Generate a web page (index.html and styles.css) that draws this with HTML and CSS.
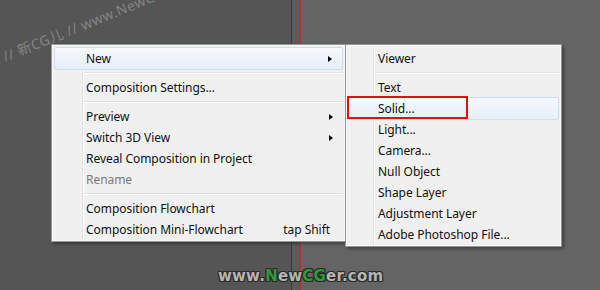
FILE: index.html
```html
<!DOCTYPE html>
<html>
<head>
<meta charset="utf-8">
<link rel="stylesheet" href="styles.css">
</head>
<body>
<div class="stage">
  <div class="col col-left"></div>
  <div class="col col-line"></div>
  <div class="col col-mid"></div>
  <div class="col col-red"></div>
  <div class="col col-right"></div>

  <div class="wm-top">儿 // 新CG儿 // www.NewCGer</div>

  <div class="menu main-menu">
    <div class="gutter"></div>
    <div class="item hl"><span class="label">New</span><span class="arrow"></span></div>
    <div class="sep"></div>
    <div class="item"><span class="label">Composition Settings...</span></div>
    <div class="sep"></div>
    <div class="item"><span class="label">Preview</span><span class="arrow"></span></div>
    <div class="item"><span class="label">Switch 3D View</span><span class="arrow"></span></div>
    <div class="item"><span class="label">Reveal Composition in Project</span></div>
    <div class="item disabled"><span class="label">Rename</span></div>
    <div class="sep"></div>
    <div class="item"><span class="label">Composition Flowchart</span></div>
    <div class="item"><span class="label">Composition Mini-Flowchart</span><span class="shortcut">tap Shift</span></div>
  </div>

  <div class="menu sub-menu">
    <div class="gutter"></div>
    <div class="item"><span class="label">Viewer</span></div>
    <div class="sep"></div>
    <div class="item"><span class="label">Text</span></div>
    <div class="item hl"><span class="label">Solid...</span><span class="redbox"></span></div>
    <div class="item"><span class="label">Light...</span></div>
    <div class="item"><span class="label">Camera...</span></div>
    <div class="item"><span class="label">Null Object</span></div>
    <div class="item"><span class="label">Shape Layer</span></div>
    <div class="item"><span class="label">Adjustment Layer</span></div>
    <div class="item"><span class="label">Adobe Photoshop File...</span></div>
  </div>

  <div class="wm-bottom">www.<span class="g">N</span>ew<span class="g">CG</span>er.com</div>
</div>
</body>
</html>
```
FILE: styles.css
```css
* { box-sizing: border-box; }
html, body { margin: 0; padding: 0; }
body { width: 600px; height: 290px; overflow: hidden; font-family: "Noto Sans", "Liberation Sans", sans-serif; }

.stage { position: relative; width: 600px; height: 290px; display: flex; overflow: hidden; }
.col { height: 100%; }
.col-left { width: 291px; background: #555555; }
.col-line { width: 1px; background: #3a3a46; }
.col-mid { width: 7px; background: #5b5b5b; }
.col-red { width: 2px; background: #a83636; }
.col-right { flex: 1; background: #646464; }

.wm-top {
  position: absolute; left: -18px; top: 54px;
  transform: rotate(-22deg); transform-origin: left top;
  font-size: 14px; color: rgba(200,200,200,0.42); white-space: nowrap;
  font-family: "Noto Sans", "Noto Sans CJK SC", sans-serif; letter-spacing: 0.5px;
}

.menu {
  position: absolute;
  background: #f0f0f0;
  border: 1px solid #979797;
  box-shadow: inset 0 0 0 1px #f8f8f8, 2px 2px 3px rgba(0,0,0,0.35);
  font-size: 12px; color: #111;
  display: flex; flex-direction: column;
}
.main-menu { left: 51px; top: 44px; width: 295px; padding: 3px 2px 1px; }
.sub-menu { left: 345px; top: 44px; width: 217px; padding: 3px 2px 1px; }

.gutter { position: absolute; top: 2px; bottom: 2px; width: 2px; border-left: 1px solid #e2e3e3; border-right: 1px solid #ffffff; }
.main-menu .gutter { left: 30px; }
.sub-menu .gutter { left: 27px; }

.item { position: relative; height: 21px; display: flex; align-items: center; padding-right: 8px; letter-spacing: -0.05px; }
.main-menu .item { padding-left: 32px; }
.sub-menu .item { padding-left: 30px; }
.label { flex: 1; white-space: nowrap; }
.item.disabled { color: #7a7a7a; }
.shortcut { margin-right: 5px; white-space: nowrap; }
.arrow { width: 0; height: 0; border-top: 3.5px solid transparent; border-bottom: 3.5px solid transparent; border-left: 4px solid #000; margin-right: 2px; }

.item.hl {
  border: 1px solid #c9dff3;
  border-radius: 2px;
  background: linear-gradient(#f6f9fd, #e6eef8);
  margin-top: -1px; margin-bottom: -1px; height: 23px;
}
.main-menu .item.hl { padding-left: 31px; }
.sub-menu .item.hl { padding-left: 29px; }

.sep { height: 8px; position: relative; margin-left: 30px; }
.sep::before { content: ""; position: absolute; left: 0; right: 0; top: 3px; height: 1px; background: #e0e0e0; }
.sep::after { content: ""; position: absolute; left: 0; right: 0; top: 4px; height: 1px; background: #ffffff; }
.sub-menu .sep { margin-left: 27px; }

.redbox { position: absolute; left: -2px; top: -2px; width: 121px; height: 23px; border: 2px solid #e01010; }

.wm-bottom {
  position: absolute; left: 218px; top: 267px;
  font-family: "DejaVu Sans", sans-serif; font-weight: bold; font-size: 15px;
  color: #b4b4b4; letter-spacing: 0.2px;
  text-shadow: -1px -1px 0 #2a2a2a, 1px -1px 0 #2a2a2a, -1px 1px 0 #2a2a2a, 1px 1px 0 #2a2a2a, 0 1px 0 #2a2a2a, 0 -1px 0 #2a2a2a, 1px 0 0 #2a2a2a, -1px 0 0 #2a2a2a;
}
.wm-bottom .g { color: #2f9a34; }
```
